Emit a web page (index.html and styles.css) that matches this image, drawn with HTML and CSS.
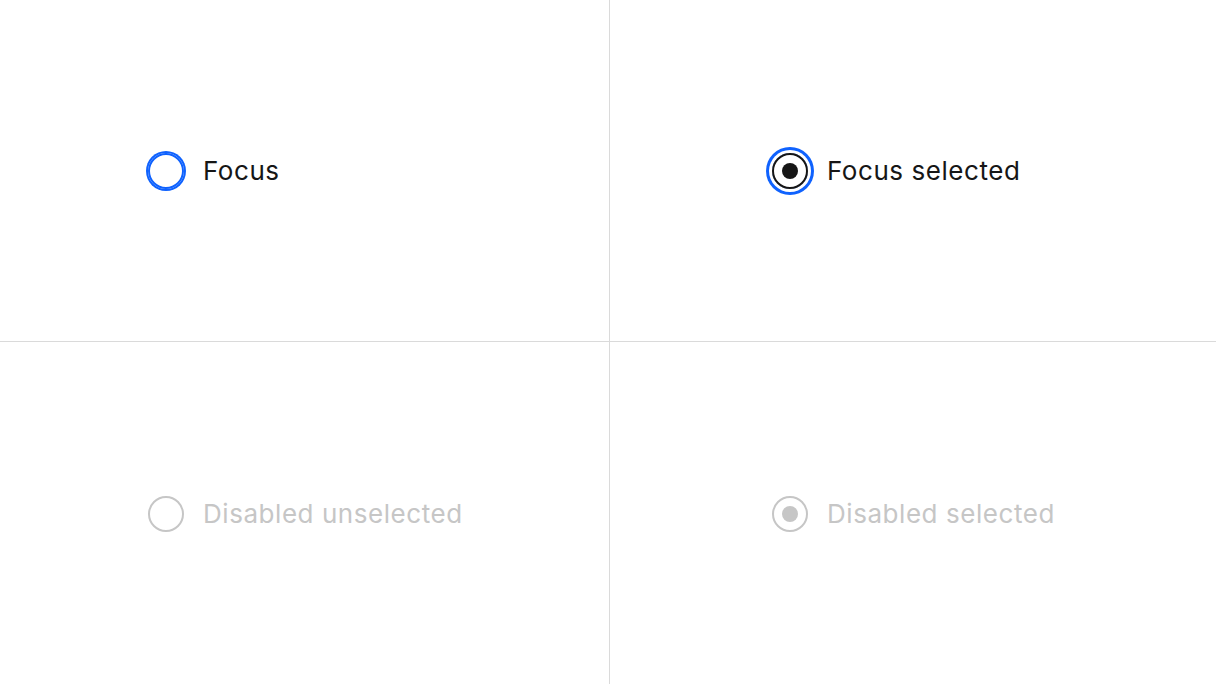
FILE: index.html
```html
<!DOCTYPE html>
<html lang="en">
<head>
<meta charset="utf-8">
<title>Radio states</title>
<link rel="stylesheet" href="styles.css">
</head>
<body>
<main class="board">
  <div class="cell cell-left cell-top">
    <label class="radio-item">
      <span class="radio radio-focus"></span>
      <span class="label">Focus</span>
    </label>
  </div>
  <div class="cell cell-right cell-top">
    <label class="radio-item">
      <span class="radio radio-focus-selected"><span class="dot"></span></span>
      <span class="label">Focus selected</span>
    </label>
  </div>
  <div class="cell cell-left cell-bottom">
    <label class="radio-item is-disabled">
      <span class="radio radio-disabled"></span>
      <span class="label">Disabled unselected</span>
    </label>
  </div>
  <div class="cell cell-right cell-bottom">
    <label class="radio-item is-disabled">
      <span class="radio radio-disabled"><span class="dot"></span></span>
      <span class="label">Disabled selected</span>
    </label>
  </div>
</main>
</body>
</html>
```
FILE: styles.css
```css
html, body {
  margin: 0;
  padding: 0;
  background: #ffffff;
}

body {
  font-family: "Inter", "Noto Sans", sans-serif;
  color: #161616;
}

.board {
  display: grid;
  grid-template-columns: 610px 1fr;
  grid-template-rows: 342px 1fr;
  width: 1216px;
  height: 684px;
}

.cell {
  display: flex;
  align-items: center;
  box-sizing: border-box;
}

.cell-left {
  border-right: 1px solid #dadada;
  padding-left: 148px;
}

.cell-right {
  padding-left: 162px;
}

.cell-top {
  border-bottom: 1px solid #dadada;
}

.cell-bottom {
  padding-top: 2px;
}

.radio-item {
  display: flex;
  align-items: center;
  gap: 19px;
}

.radio {
  width: 36px;
  height: 36px;
  box-sizing: border-box;
  border-radius: 50%;
  border: 2px solid #161616;
  display: flex;
  align-items: center;
  justify-content: center;
  flex: none;
}

.dot {
  width: 16px;
  height: 16px;
  border-radius: 50%;
  background: #161616;
}

.radio-focus {
  border-color: #0f62fe;
  box-shadow: 0 0 0 2px #0f62fe;
}

.radio-focus-selected {
  box-shadow: 0 0 0 3px #ffffff, 0 0 0 6px #0f62fe;
}

.radio-disabled {
  border-color: #c6c6c6;
}

.radio-disabled .dot {
  background: #c6c6c6;
}

.label {
  font-size: 26px;
  letter-spacing: 0.55px;
  line-height: 36px;
  color: #161616;
}

.is-disabled .label {
  color: #c6c6c6;
}
```
